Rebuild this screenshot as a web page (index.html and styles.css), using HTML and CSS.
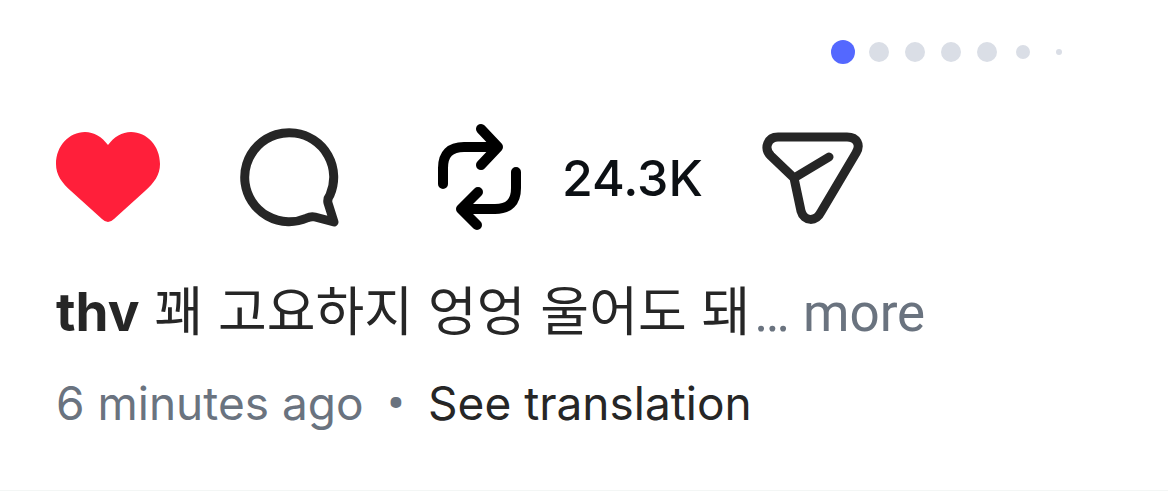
FILE: index.html
```html
<!DOCTYPE html>
<html lang="en">
<head>
<meta charset="utf-8">
<meta name="viewport" content="width=device-width, initial-scale=1">
<title>Post</title>
<link rel="stylesheet" href="styles.css">
</head>
<body>
<article class="post">
  <div class="dots" role="img" aria-label="Photo 1 of 7">
    <span class="dot dot-active"></span>
    <span class="dot"></span>
    <span class="dot"></span>
    <span class="dot"></span>
    <span class="dot"></span>
    <span class="dot dot-small"></span>
    <span class="dot dot-tiny"></span>
  </div>
  <div class="actions">
    <button class="action like" type="button" aria-label="Unlike">
      <svg width="104" height="92" viewBox="0 0 104 92"><path fill="#ff1f3a" d="M52 13C58 5 66 0 75 0C91 0 104 14 104 32C104 43 98 51 89 59L58 87Q52 93 46 87L15 59C6 51 0 43 0 32C0 14 13 0 29 0C38 0 46 5 52 13Z"/></svg>
    </button>
    <button class="action comment" type="button" aria-label="Comment">
      <svg width="100" height="100" viewBox="0 0 100 100" fill="none" stroke="#262626" stroke-width="9" stroke-linejoin="round"><path d="M90 67A44.500 44.500 0 1 0 67 90Q71 88 75 89L94 94L88 75Q87 71 90 67Z"/></svg>
    </button>
    <button class="action repost" type="button">
      <svg aria-hidden="true" width="84" height="108" viewBox="0 0 84 108" fill="none" stroke="#000" stroke-width="10" stroke-linecap="round" stroke-linejoin="round"><path d="M5 60V44Q5 23 26 23H59M43 5L60 23L43 41M78 48V64Q78 85 57 85H24M40 68L23 85L39 101"/></svg>
      <span>24.3K</span>
    </button>
    <button class="action share" type="button" aria-label="Share">
      <svg width="100" height="92" viewBox="0 0 100 92" fill="none" stroke="#262626" stroke-width="9" stroke-linecap="round" stroke-linejoin="round"><path d="M15 5H84C94 5 98 13 93 21L58 80C53 90 41 90 38 79L31 46L8 24C0 16 5 5 15 5ZM31 46L66 25"/></svg>
    </button>
  </div>
  <p class="caption"><a class="author" href="#">thv</a> <span lang="ko">꽤 고요하지 엉엉 울어도 돼</span><button class="more" type="button">… more</button></p>
  <div class="meta"><time>6 minutes ago</time><span class="separator">•</span><button class="translate" type="button">See translation</button></div>
</article>
</body>
</html>
```
FILE: styles.css
```css
* { box-sizing: border-box; }
body {
  margin: 0;
  background: #fff;
  color: #262626;
  font-family: Inter, "Noto Sans CJK KR", sans-serif;
}
button {
  padding: 0;
  border: 0;
  background: none;
  color: inherit;
  font: inherit;
  cursor: pointer;
}
a { color: inherit; text-decoration: none; }
svg { display: block; flex: none; overflow: visible; }
.post { padding: 40px 56px 0; border-bottom: 1px solid #f3f6f5; min-height: 100vh; }
.dots { display: flex; justify-content: flex-end; align-items: center; gap: 16px; height: 24px; padding-right: 50px; }
.dot { width: 20px; height: 20px; border-radius: 50%; background: #dadee6; }
.dot-active { width: 24px; height: 24px; margin-right: -2px; background: #5468ff; }
.dot-small { width: 14px; height: 14px; margin: 0 3px; }
.dot-tiny { width: 6px; height: 6px; margin-left: 7px; }
.actions { display: flex; align-items: center; height: 108px; margin-top: 60px; }
.comment { margin-left: 80px; }
.repost { display: flex; align-items: center; gap: 40px; margin-left: 98px; color: #0c1014; font-size: 50px; font-weight: 500; }
.share { margin-left: 60px; }
.caption { margin: 44px 0 0; font-size: 53px; line-height: 72px; white-space: nowrap; }
.author { font-weight: 700; }
.more { margin-left: 4px; color: #6a737f; font-family: Roboto, sans-serif; }
.meta { display: flex; align-items: center; margin-top: 28px; font-size: 46px; line-height: 52px; }
.meta time, .separator { color: #6a737f; }
.separator { margin: 0 24px; font-family: Roboto, sans-serif; font-weight: 700; }
```
